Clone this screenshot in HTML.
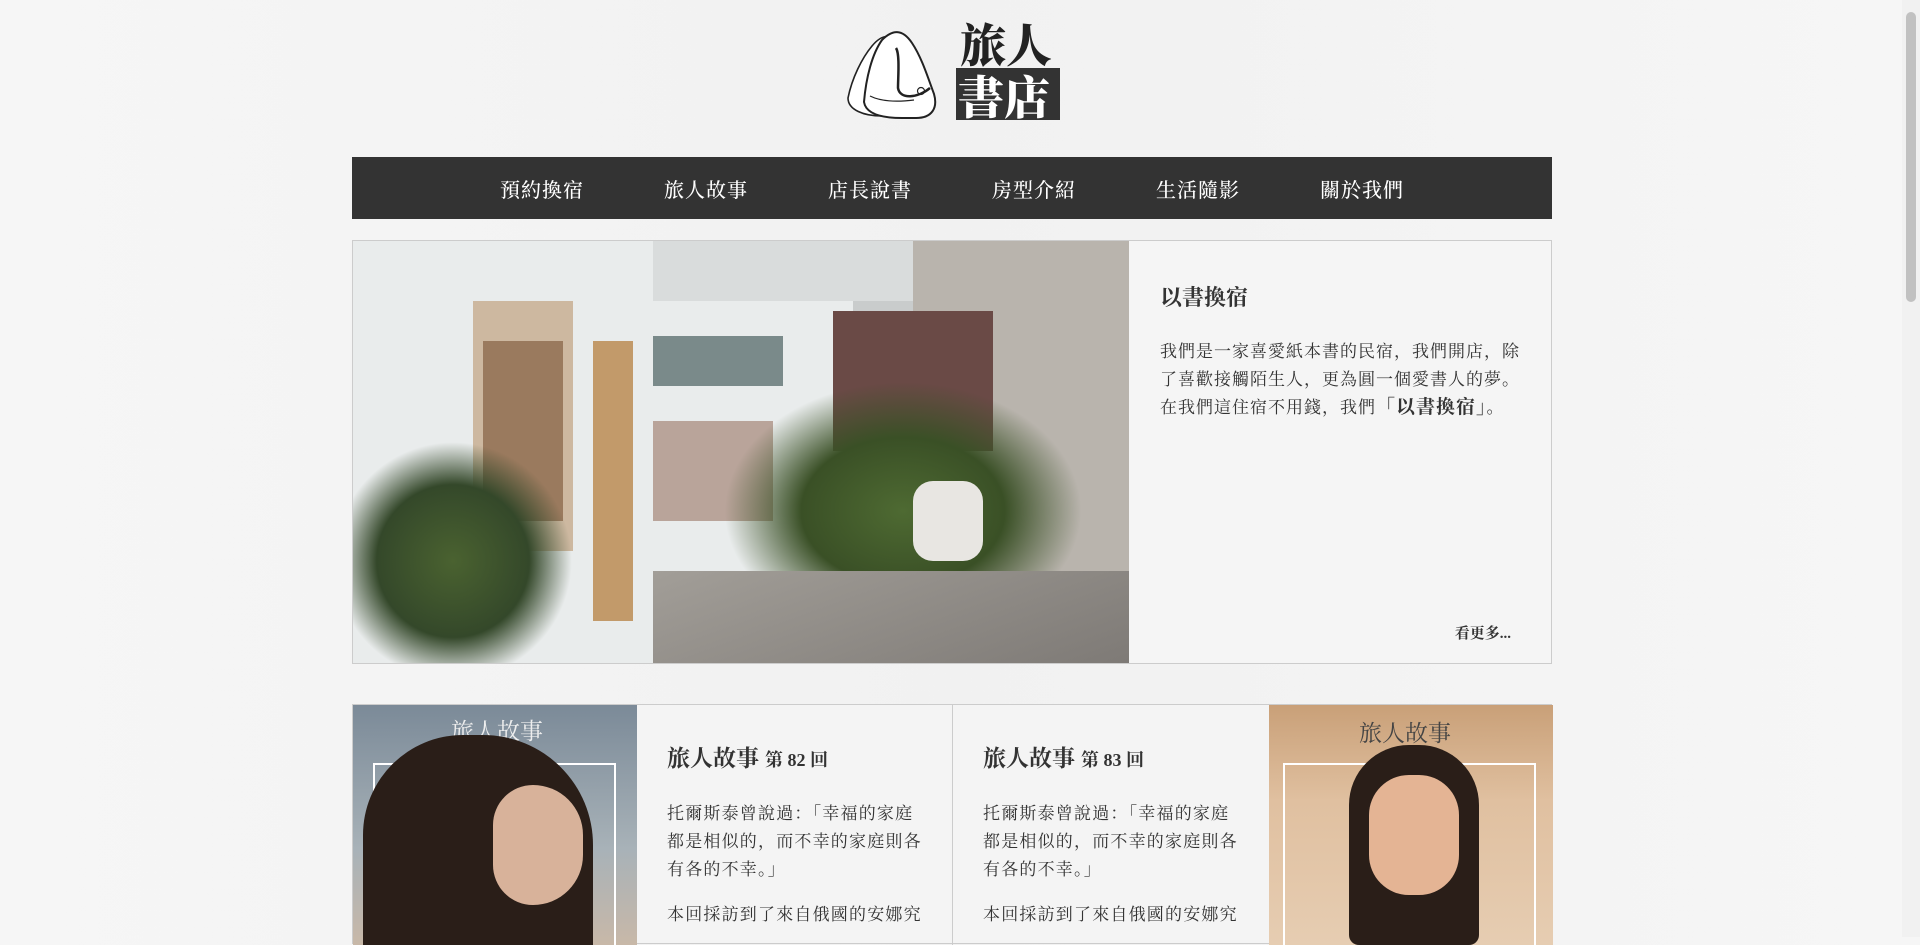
<!DOCTYPE html>
<html><head><meta charset="utf-8"><style>
*{margin:0;padding:0;box-sizing:border-box}
body{width:1920px;height:937px;overflow:hidden;background:linear-gradient(90deg,#f6f6f6,#f1f1f1 50%,#f6f6f6);font-family:"Liberation Serif","Noto Serif CJK SC",serif;color:#333;position:relative}
.logo{position:absolute;left:842px;top:18px;width:220px;height:102px}
.nav{position:absolute;left:352px;top:157px;width:1200px;height:62px;background:#333;display:flex;justify-content:center;align-items:center}
.nav span{color:#fff;font-size:20px;margin:0 40px;letter-spacing:1px;font-weight:500}
.hero{position:absolute;left:352px;top:240px;width:1200px;height:424px;border:1px solid #ccc;background:#f5f5f5}
.photo{position:absolute;left:0;top:0;width:776px;height:422px;overflow:hidden;background:#c9cccc}
.panel{position:absolute;left:777px;top:0;width:421px;height:422px;padding:40px 28px 40px 30px}
.panel h2{font-size:22px;margin-bottom:26px;font-weight:bold}
.panel p{font-size:17px;line-height:28px;letter-spacing:1px}
.more{position:absolute;right:40px;bottom:20px;font-size:15px;font-weight:bold}
.cards{position:absolute;left:352px;top:704px;width:1200px;height:240px;border:1px solid #ccc;background:#f4f4f4}
.c{position:absolute;top:0;height:240px}
.txt{padding:40px 26px 40px 30px;font-size:17px;line-height:28px;letter-spacing:1.2px}
.txt h3{font-size:23px;font-weight:bold;margin-bottom:26px;letter-spacing:0}
.txt h3 small{font-size:18px;margin-left:6px}
.txt p{margin-bottom:17px}
.sb{position:absolute;right:0;top:0;width:18px;height:937px;background:#f1f1f1}
.sb div{position:absolute;left:4px;top:12px;width:10px;height:290px;background:#c1c1c1;border-radius:5px}
.b{position:absolute}
</style></head><body>
<svg class="logo" viewBox="0 0 220 102">
<path d="M30 28 C20 40 10 60 6 80 C6 92 22 98 40 98 L62 99 C75 100 82 92 80 80 C78 66 72 50 60 30 C50 14 40 16 30 28Z" fill="#fff" stroke="#222" stroke-width="1.6"/>
<path d="M40 22 C30 36 24 60 22 84 C24 96 40 100 60 100 L74 100 C90 100 96 90 92 76 C86 60 80 40 70 25 C60 10 50 12 40 22Z" fill="#fff" stroke="#222" stroke-width="2"/>
<path d="M54 30 C58 36 56 60 56 70 C58 82 76 80 88 70" fill="none" stroke="#222" stroke-width="2.5"/>
<path d="M28 78 C40 84 56 84 72 82" fill="none" stroke="#222" stroke-width="1.2"/>
<circle cx="79" cy="73" r="3.5" fill="none" stroke="#222" stroke-width="1.2"/>
<text x="118" y="44" font-family="Noto Serif CJK SC,serif" font-weight="900" font-size="46" fill="#222">旅人</text>
<rect x="114" y="50" width="104" height="52" fill="#333"/>
<text x="116" y="96" font-family="Noto Serif CJK SC,serif" font-weight="900" font-size="46" fill="#fff">書店</text>
</svg>
<div class="nav"><span>預約換宿</span><span>旅人故事</span><span>店長說書</span><span>房型介紹</span><span>生活隨影</span><span>關於我們</span></div>
<div class="hero">
<div class="photo">
<div class="b" style="left:0;top:0;width:500px;height:422px;background:#e9ecec"></div>
<div class="b" style="left:300px;top:0;width:300px;height:60px;background:#d9dcdc"></div>
<div class="b" style="left:560px;top:0;width:216px;height:350px;background:#b9b4ad"></div>
<div class="b" style="left:480px;top:70px;width:160px;height:140px;background:#6a4a46"></div>
<div class="b" style="left:120px;top:60px;width:100px;height:250px;background:#cdb8a0"></div>
<div class="b" style="left:130px;top:100px;width:80px;height:180px;background:#9a7a5e"></div>
<div class="b" style="left:240px;top:100px;width:40px;height:280px;background:#c29a6a"></div>
<div class="b" style="left:300px;top:95px;width:130px;height:50px;background:#7a8a8a"></div>
<div class="b" style="left:300px;top:180px;width:120px;height:100px;background:#b9a49a"></div>
<div class="b" style="left:-20px;top:200px;width:240px;height:240px;background:radial-gradient(circle,#4a6230 0%,#34482a 45%,transparent 70%)"></div>
<div class="b" style="left:370px;top:140px;width:360px;height:260px;background:radial-gradient(ellipse,#4e6a32 0%,#3a5026 40%,transparent 70%)"></div>
<div class="b" style="left:300px;top:330px;width:476px;height:92px;background:linear-gradient(160deg,#a29e98,#7e7a76)"></div>
<div class="b" style="left:560px;top:240px;width:70px;height:80px;background:#e8e6e2;border-radius:20px"></div>
</div>
<div class="panel"><h2>以書換宿</h2><p>我們是一家喜愛紙本書的民宿，我們開店，除了喜歡接觸陌生人，更為圓一個愛書人的夢。在我們這住宿不用錢，我們<b style="font-size:19px">「以書換宿」</b>。</p><div class="more">看更多...</div></div>
</div>
<div class="cards">
<div class="c" style="left:0;width:284px;background:linear-gradient(180deg,#7b8a98,#a8b2b8 60%,#c8b8a8);overflow:hidden">
<div class="b" style="left:98px;top:8px;color:#eee;font-size:23px">旅人故事</div>
<div class="b" style="left:20px;top:58px;width:243px;height:200px;border:2px solid #fff"></div>
<div class="b" style="left:10px;top:30px;width:230px;height:240px;background:#2a1e18;border-radius:100px 110px 20px 20px"></div>
<div class="b" style="left:140px;top:80px;width:90px;height:120px;background:#d8b29a;border-radius:40px 50px 50px 40px"></div>
</div>
<div class="c txt" style="left:284px;width:316px;border-right:1px solid #ccc"><h3>旅人故事<small>第 82 回</small></h3><p>托爾斯泰曾說過：「幸福的家庭都是相似的，而不幸的家庭則各有各的不幸。」</p><p>本回採訪到了來自俄國的安娜究</p></div>
<div class="c txt" style="left:600px;width:316px"><h3>旅人故事<small>第 83 回</small></h3><p>托爾斯泰曾說過：「幸福的家庭都是相似的，而不幸的家庭則各有各的不幸。」</p><p>本回採訪到了來自俄國的安娜究</p></div>
<div class="c" style="left:916px;width:284px;background:linear-gradient(180deg,#c9a078,#e0c0a0 40%,#e6cdb2);overflow:hidden">
<div class="b" style="left:90px;top:10px;color:#444;font-size:23px">旅人故事</div>
<div class="b" style="left:14px;top:58px;width:253px;height:200px;border:2px solid #fff"></div>
<div class="b" style="left:80px;top:40px;width:130px;height:200px;background:#2a1e18;border-radius:60px 60px 10px 10px"></div>
<div class="b" style="left:100px;top:70px;width:90px;height:120px;background:#e4b494;border-radius:40px"></div>
</div>
</div>
<div class="sb"><div></div></div>
</body></html>
